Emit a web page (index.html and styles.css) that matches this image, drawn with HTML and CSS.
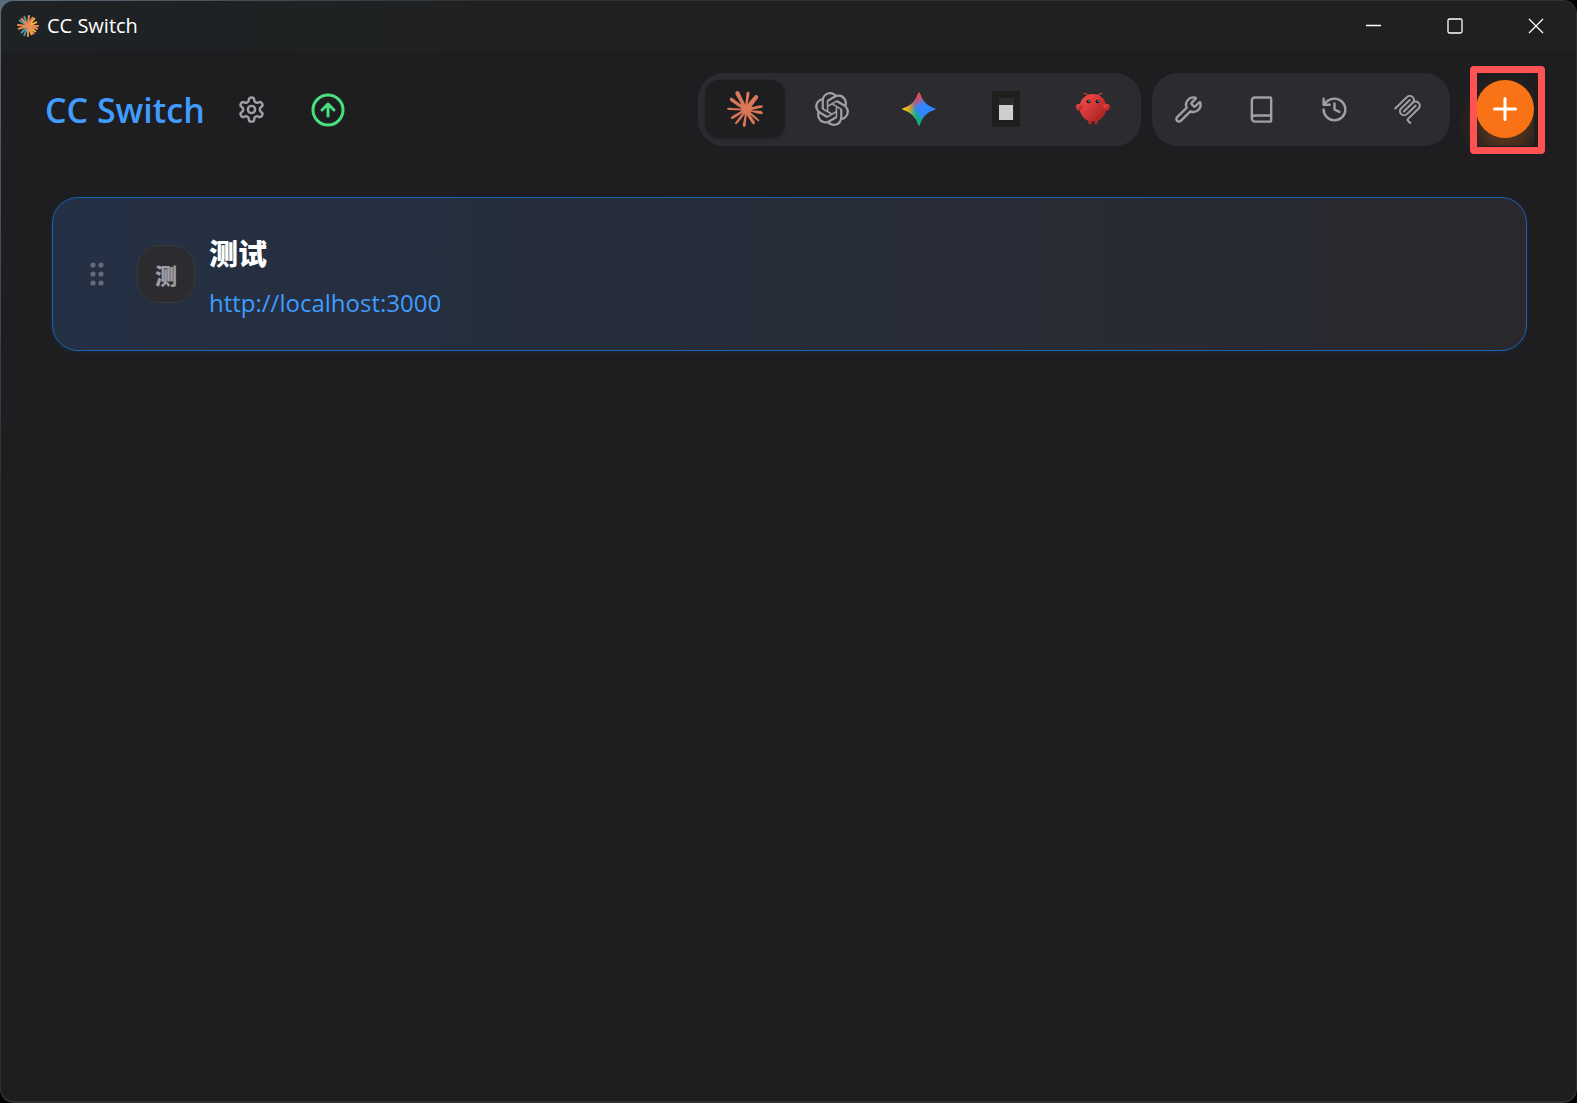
FILE: index.html
```html
<!DOCTYPE html>
<html lang="zh-CN">
<head>
  <meta charset="UTF-8">
  <meta name="viewport" content="width=device-width, initial-scale=1.0">
  <title>CC Switch</title>
  <link rel="stylesheet" href="styles.css">
</head>
<body>
  <div class="frame">
    <div class="window">
      <div class="titlebar">
        <svg class="app-logo" viewBox="0 0 24 24" aria-hidden="true">
          <g fill="none" stroke-width="2.2" stroke-linecap="round">
            <path stroke="#4f9aa3" d="M12 12 8 2M12 12 3 6M12 12 5 19M12 12 8 22"/>
            <path stroke="#f2b23c" d="M12 12 19 4M12 12 21 8M12 12 20 18M12 12 16 21"/>
            <path stroke="#ee8a55" d="M12 12 13 1M12 12 17 3M12 12 5 4M12 12 1 11M12 12 2 15M12 12 23 12M12 12 22 15M12 12 18 20M12 12 12 23"/>
          </g>
        </svg>
        <span class="titlebar-text">CC Switch</span>
        <div class="window-controls">
          <button class="window-btn" aria-label="Minimize">
            <svg viewBox="0 0 16 16"><path d="M0 7.5h15"/></svg>
          </button>
          <button class="window-btn" aria-label="Maximize">
            <svg viewBox="0 0 16 16"><rect x="1" y="1" width="14" height="14" rx="1.5"/></svg>
          </button>
          <button class="window-btn" aria-label="Close">
            <svg viewBox="0 0 16 16"><path d="M1 1l14 14M15 1 1 15"/></svg>
          </button>
        </div>
      </div>

      <header class="header">
        <div class="brand">
          <h1>CC Switch</h1>
          <button class="icon-btn" aria-label="Settings">
            <svg class="icon" viewBox="0 0 24 24">
              <path d="M12.22 2h-.44a2 2 0 0 0-2 2v.18a2 2 0 0 1-1 1.73l-.43.25a2 2 0 0 1-2 0l-.15-.08a2 2 0 0 0-2.73.73l-.22.38a2 2 0 0 0 .73 2.73l.15.1a2 2 0 0 1 1 1.72v.51a2 2 0 0 1-1 1.74l-.15.09a2 2 0 0 0-.73 2.73l.22.38a2 2 0 0 0 2.73.73l.15-.08a2 2 0 0 1 2 0l.43.25a2 2 0 0 1 1 1.73V20a2 2 0 0 0 2 2h.44a2 2 0 0 0 2-2v-.18a2 2 0 0 1 1-1.73l.43-.25a2 2 0 0 1 2 0l.15.08a2 2 0 0 0 2.73-.73l.22-.39a2 2 0 0 0-.73-2.73l-.15-.08a2 2 0 0 1-1-1.74v-.5a2 2 0 0 1 1-1.74l.15-.09a2 2 0 0 0 .73-2.73l-.22-.38a2 2 0 0 0-2.73-.73l-.15.08a2 2 0 0 1-2 0l-.43-.25a2 2 0 0 1-1-1.73V4a2 2 0 0 0-2-2z"/>
              <circle cx="12" cy="12" r="3"/>
            </svg>
          </button>
          <button class="icon-btn update-btn" aria-label="Update">
            <svg class="icon icon-lg" viewBox="0 0 24 24">
              <circle cx="12" cy="12" r="10"/>
              <path d="m16 12-4-4-4 4M12 16V8"/>
            </svg>
          </button>
        </div>

        <div class="toolbar">
          <nav class="pill apps">
            <button class="app-btn active" aria-label="Claude">
              <svg class="logo claude" viewBox="0 0 24 24">
                <path d="m4.7144 15.9555 4.7174-2.6471.079-.2307-.079-.1275h-.2307l-.7893-.0486-2.6956-.0729-2.3375-.0971-2.2646-.1214-.5707-.1215-.5343-.7042.0546-.3522.4797-.3218.686.0608 1.5179.1032 2.2767.1578 1.6514.0972 2.4468.255h.3886l.0546-.1579-.1336-.0971-.1032-.0972L6.973 9.8356l-2.55-1.6879-1.3356-.9714-.7225-.4918-.3643-.4614-.1578-1.0078.6557-.7225.8803.0607.2246.0607.8925.686 1.9064 1.4754 2.4893 1.8336.3643.3035.1457-.1032.0182-.0728-.164-.2733-1.3539-2.4467-1.445-2.4893-.6435-1.032-.17-.6194c-.0607-.255-.1032-.4674-.1032-.7285L6.287.1335 6.6997 0l.9957.1336.419.3642.6192 1.4147 1.0018 2.2282 1.5543 3.0296.4553.8985.2429.8318.091.255h.1579v-.1457l.1275-1.706.2368-2.0947.2307-2.6957.0789-.7589.3764-.9107.7468-.4918.5828.2793.4797.686-.0668.4433-.2853 1.8517-.5586 2.9021-.3643 1.9429h.2125l.2429-.2429.9835-1.3053 1.6514-2.0643.7286-.8196.85-.9046.5464-.4311h1.0321l.759 1.1293-.34 1.1657-1.0625 1.3478-.8804 1.1414-1.2628 1.7-.7893 1.36.0729.1093.1882-.0183 2.8535-.607 1.5421-.2794 1.8396-.3157.8318.3886.091.3946-.3278.8075-1.967.4857-2.3072.4614-3.4364.8136-.0425.0304.0486.0607 1.5482.1457.6618.0364h1.621l3.0175.2247.7892.522.4736.6376-.079.4857-1.2142.6193-1.6393-.3886-3.825-.9107-1.3113-.3279h-.1822v.1093l1.0929 1.0686 2.0035 1.8092 2.5075 2.3314.1275.5768-.3218.4554-.34-.0486-2.2039-1.6575-.85-.7468-1.9246-1.621h-.1275v.17l.4432.6496 2.3436 3.5214.1214 1.0807-.17.3521-.6071.2125-.6679-.1214-1.3721-1.9246L14.38 17.959l-1.1414-1.9428-.1397.079-.674 7.2552-.3156.3703-.7286.2793-.6071-.4614-.3218-.7468.3218-1.4753.3886-1.9246.3157-1.53.2853-1.9004.17-.6314-.0121-.0425-.1397.0182-1.4328 1.9672-2.1796 2.9446-1.7243 1.8456-.4128.164-.7164-.3704.0667-.6618.4008-.5889 2.386-3.0357 1.4389-1.882.929-1.0868-.0062-.1579h-.0546l-6.3385 4.1164-1.1293.1457-.4857-.4554.0608-.7467.2307-.2429 1.9064-1.3114Z"/>
              </svg>
            </button>
            <button class="app-btn" aria-label="Codex">
              <svg class="logo codex" viewBox="0 0 24 24">
                <path d="M22.2819 9.8211a5.9847 5.9847 0 0 0-.5157-4.9108 6.0462 6.0462 0 0 0-6.5098-2.9A6.0651 6.0651 0 0 0 4.9807 4.1818a5.9847 5.9847 0 0 0-3.9977 2.9 6.0462 6.0462 0 0 0 .7427 7.0966 5.98 5.98 0 0 0 .511 4.9107 6.051 6.051 0 0 0 6.5146 2.9001A5.9847 5.9847 0 0 0 13.2599 24a6.0557 6.0557 0 0 0 5.7718-4.2058 5.9894 5.9894 0 0 0 3.9977-2.9001 6.0557 6.0557 0 0 0-.7475-7.0729zm-9.022 12.6081a4.4755 4.4755 0 0 1-2.8764-1.0408l.1419-.0804 4.7783-2.7582a.7948.7948 0 0 0 .3927-.6813v-6.7369l2.02 1.1686a.071.071 0 0 1 .038.052v5.5826a4.504 4.504 0 0 1-4.4945 4.4944zm-9.6607-4.1254a4.4708 4.4708 0 0 1-.5346-3.0137l.142.0852 4.783 2.7582a.7712.7712 0 0 0 .7806 0l5.8428-3.3685v2.3324a.0804.0804 0 0 1-.0332.0615L9.74 19.9502a4.4992 4.4992 0 0 1-6.1408-1.6464zM2.3408 7.8956a4.485 4.485 0 0 1 2.3655-1.9728V11.6a.7664.7664 0 0 0 .3879.6765l5.8144 3.3543-2.0201 1.1685a.0757.0757 0 0 1-.071 0l-4.8303-2.7865A4.504 4.504 0 0 1 2.3408 7.872zm16.5963 3.8558L13.1038 8.364 15.1192 7.2a.0757.0757 0 0 1 .071 0l4.8303 2.7913a4.4944 4.4944 0 0 1-.6765 8.1042v-5.6772a.79.79 0 0 0-.407-.667zm2.0107-3.0231l-.142-.0852-4.7735-2.7818a.7759.7759 0 0 0-.7854 0L9.409 9.2297V6.8974a.0662.0662 0 0 1 .0284-.0615l4.8303-2.7866a4.4992 4.4992 0 0 1 6.6802 4.66zM8.3065 12.863l-2.02-1.1638a.0804.0804 0 0 1-.038-.0567V6.0742a4.4992 4.4992 0 0 1 7.3757-3.4537l-.142.0805L8.704 5.459a.7948.7948 0 0 0-.3927.6813zm1.0976-2.3654l2.602-1.4998 2.6069 1.4998v2.9994l-2.5974 1.4997-2.6067-1.4997Z"/>
              </svg>
            </button>
            <button class="app-btn" aria-label="Gemini">
              <svg class="logo" viewBox="0 0 24 24">
                <defs>
                  <linearGradient id="gem-green" gradientUnits="userSpaceOnUse" x1="7" x2="11" y1="15.5" y2="12"><stop stop-color="#08B962"/><stop offset="1" stop-color="#08B962" stop-opacity="0"/></linearGradient>
                  <linearGradient id="gem-red" gradientUnits="userSpaceOnUse" x1="8" x2="11.5" y1="5.5" y2="11"><stop stop-color="#F94543"/><stop offset="1" stop-color="#F94543" stop-opacity="0"/></linearGradient>
                  <linearGradient id="gem-yellow" gradientUnits="userSpaceOnUse" x1="3.5" x2="17.5" y1="13.5" y2="12"><stop stop-color="#FABC12"/><stop offset=".46" stop-color="#FABC12" stop-opacity="0"/></linearGradient>
                  <path id="gem-star" d="M20.616 10.835a14.147 14.147 0 01-4.45-3.001 14.111 14.111 0 01-3.678-6.452.503.503 0 00-.975 0 14.134 14.134 0 01-3.679 6.452 14.155 14.155 0 01-4.45 3.001c-.65.28-1.318.505-2.002.678a.502.502 0 000 .975c.684.172 1.35.397 2.002.677a14.147 14.147 0 014.45 3.001 14.112 14.112 0 013.679 6.453.502.502 0 00.975 0c.172-.685.397-1.351.677-2.003a14.145 14.145 0 013.001-4.45 14.113 14.113 0 016.453-3.678.503.503 0 000-.975 13.245 13.245 0 01-2.003-.678z"/>
                </defs>
                <use href="#gem-star" fill="#3186FF"/>
                <use href="#gem-star" fill="url(#gem-green)"/>
                <use href="#gem-star" fill="url(#gem-red)"/>
                <use href="#gem-star" fill="url(#gem-yellow)"/>
              </svg>
            </button>
            <button class="app-btn" aria-label="OpenCode">
              <svg class="logo" viewBox="0 0 36 36" shape-rendering="crispEdges">
                <path fill="#211e1e" fill-rule="evenodd" d="M4 0h28v36H4zM11 7v22h15V7z"/>
                <path fill="#cfcecd" d="M11 14h14v15H11z"/>
              </svg>
            </button>
            <button class="app-btn" aria-label="OpenClaw">
              <svg class="logo" viewBox="0 0 120 120">
                <defs>
                  <linearGradient id="claw" x1="0" y1="0" x2="1" y2="1"><stop stop-color="#ff4d4d"/><stop offset="1" stop-color="#991b1b"/></linearGradient>
                </defs>
                <g fill="url(#claw)">
                  <path d="M60 10C30 10 15 35 15 55s15 40 30 45v10h10v-10s5 2 10 0v10h10v-10c15-5 30-25 30-45S90 10 60 10Z"/>
                  <path d="M20 45C5 40 0 50 5 60s15 5 20-5c3-7 0-10-5-10Z"/>
                  <path d="M100 45c15-5 20 5 15 15s-15 5-20-5c-3-7 0-10 5-10Z"/>
                </g>
                <path fill="none" stroke="#ff4d4d" stroke-width="3" stroke-linecap="round" d="M45 15Q35 5 30 8M75 15Q85 5 90 8"/>
                <circle cx="45" cy="35" r="6" fill="#050810"/>
                <circle cx="75" cy="35" r="6" fill="#050810"/>
                <circle cx="46" cy="34" r="3" fill="#00b5a2"/>
                <circle cx="76" cy="34" r="3" fill="#00b5a2"/>
              </svg>
            </button>
          </nav>

          <div class="pill tools">
            <button class="icon-btn" aria-label="Skills">
              <svg class="icon" viewBox="0 0 24 24"><path d="M14.7 6.3a1 1 0 0 0 0 1.4l1.6 1.6a1 1 0 0 0 1.4 0l3.106-3.105c.32-.322.863-.22.983.218a6 6 0 0 1-8.259 7.057l-7.91 7.91a1 1 0 0 1-2.999-3l7.91-7.91a6 6 0 0 1 7.057-8.259c.438.12.54.662.219.984z"/></svg>
            </button>
            <button class="icon-btn" aria-label="Prompts">
              <svg class="icon" viewBox="0 0 24 24"><path d="M4 19.5v-15A2.5 2.5 0 0 1 6.5 2H19a1 1 0 0 1 1 1v18a1 1 0 0 1-1 1H6.5a1 1 0 0 1 0-5H20"/></svg>
            </button>
            <button class="icon-btn" aria-label="Sessions">
              <svg class="icon" viewBox="0 0 24 24"><path d="M3 12a9 9 0 1 0 9-9 9.75 9.75 0 0 0-6.74 2.74L3 8M3 3v5h5M12 7v5l4 2"/></svg>
            </button>
            <button class="icon-btn" aria-label="MCP">
              <svg class="icon solid" viewBox="0 0 24 24">
                <path d="M15.688 2.343a2.588 2.588 0 00-3.61 0l-9.626 9.44a.863.863 0 01-1.203 0 .823.823 0 010-1.18l9.626-9.44a4.313 4.313 0 016.016 0 4.116 4.116 0 011.204 3.54 4.3 4.3 0 013.609 1.18l.05.05a4.115 4.115 0 010 5.9l-8.706 8.537a.274.274 0 000 .393l1.788 1.754a.823.823 0 010 1.18.863.863 0 01-1.203 0l-1.788-1.753a1.92 1.92 0 010-2.754l8.706-8.538a2.47 2.47 0 000-3.54l-.05-.049a2.588 2.588 0 00-3.607-.003l-7.172 7.034-.002.002-.098.097a.863.863 0 01-1.204 0 .823.823 0 010-1.18l7.273-7.133a2.47 2.47 0 00-.003-3.537z"/>
                <path d="M14.485 4.703a.823.823 0 000-1.18.863.863 0 00-1.204 0l-7.119 6.982a4.115 4.115 0 000 5.9 4.314 4.314 0 006.016 0l7.12-6.982a.823.823 0 000-1.18.863.863 0 00-1.204 0l-7.119 6.982a2.588 2.588 0 01-3.61 0 2.47 2.47 0 010-3.54l7.12-6.982z"/>
              </svg>
            </button>
          </div>

          <div class="add-slot">
            <button class="add-btn" aria-label="Add provider">
              <svg class="icon icon-lg" viewBox="0 0 24 24"><path d="M5 12h14M12 5v14"/></svg>
            </button>
          </div>
        </div>
        <span class="highlight"></span>
      </header>

      <main class="providers">
        <article class="card">
          <button class="grip" aria-label="Drag">
            <svg viewBox="0 0 14 24">
              <circle cx="3" cy="3" r="2.6"/><circle cx="11" cy="3" r="2.6"/>
              <circle cx="3" cy="12" r="2.6"/><circle cx="11" cy="12" r="2.6"/>
              <circle cx="3" cy="21" r="2.6"/><circle cx="11" cy="21" r="2.6"/>
            </svg>
          </button>
          <span class="avatar">测</span>
          <div class="info">
            <h2>测试</h2>
            <a href="http://localhost:3000">http://localhost:3000</a>
          </div>
        </article>
      </main>
    </div>
  </div>
</body>
</html>
```
FILE: styles.css
```css
* {
  box-sizing: border-box;
}

body {
  margin: 0;
  background: radial-gradient(circle at top left, #5a6d7c, #000 400px);
  color: #fff;
  font-family: "Open Sans", "Noto Sans", "Noto Sans CJK SC", sans-serif;
}

button {
  padding: 0;
  border: 0;
  background: none;
  color: inherit;
  font: inherit;
  cursor: pointer;
}

svg {
  display: block;
}

.frame {
  display: flex;
  min-height: 100vh;
  padding: 1px 1px 2px;
  border-radius: 14px;
  background: radial-gradient(circle at top left, #5a6d7c, #303133 480px);
}

.window {
  flex: 1;
  border-radius: 13px;
  background: #1e1e20;
  overflow: hidden;
}

/* title bar */
.titlebar {
  display: flex;
  align-items: center;
  height: 50px;
  padding-left: 16px;
  background: linear-gradient(90deg, #1e2224, #202020 50%);
}

.app-logo {
  width: 22px;
  height: 22px;
}

.titlebar-text {
  margin-left: 8px;
  font-size: 20px;
  line-height: 28px;
}

.window-controls {
  display: flex;
  align-self: stretch;
  margin-left: auto;
}

.window-btn {
  display: flex;
  align-items: center;
  justify-content: center;
  width: 81px;
}

.window-btn svg {
  width: 16px;
  height: 16px;
  fill: none;
  stroke: #fff;
  stroke-width: 1.3;
}

/* header */
.header {
  position: relative;
  display: flex;
  align-items: center;
  justify-content: space-between;
  padding: 22px 42px 0 44px;
}

.brand {
  display: flex;
  align-items: center;
  gap: 18px;
}

.brand h1 {
  margin: 0;
  color: #409cff;
  font-size: 34px;
  font-weight: 600;
  line-height: 50px;
}

.icon-btn {
  display: flex;
  align-items: center;
  justify-content: center;
  width: 58px;
  height: 58px;
  color: #9f9fa8;
}

.update-btn {
  color: #4ade80;
}

.icon {
  width: 29px;
  height: 29px;
  fill: none;
  stroke: currentColor;
  stroke-width: 2;
  stroke-linecap: round;
  stroke-linejoin: round;
}

.icon.solid {
  fill: currentColor;
  stroke: none;
}

.icon-lg {
  width: 36px;
  height: 36px;
}

/* clips the glow of the add button */
.toolbar {
  display: flex;
  gap: 11px;
  overflow: hidden;
}

.pill {
  display: flex;
  height: 73px;
  border-radius: 26px;
  background: #2c2c30;
}

.apps {
  gap: 7px;
  padding: 7px 8px 8px 7px;
}

.app-btn {
  display: flex;
  align-items: center;
  justify-content: center;
  width: 80px;
  height: 58px;
  border-radius: 14px;
}

.app-btn.active {
  background: #1e1e20;
  box-shadow: 0 1px 3px rgba(0, 0, 0, 0.2);
}

.logo {
  width: 36px;
  height: 36px;
}

.claude {
  fill: #d97757;
}

.codex {
  width: 34px;
  height: 34px;
  fill: #9f9fa8;
}

.tools {
  gap: 15px;
  padding: 7px 14px 8px 7px;
}

.add-slot {
  padding: 7px 0 8px 15px;
}

.add-btn {
  display: flex;
  align-items: center;
  justify-content: center;
  width: 58px;
  height: 58px;
  border-radius: 50%;
  background: #f97316;
  box-shadow: 0 14px 22px rgba(249, 115, 22, 0.3);
}

.highlight {
  position: absolute;
  top: 15px;
  right: 31px;
  width: 75px;
  height: 88px;
  border: 7px solid #ff5252;
  border-radius: 4px;
  pointer-events: none;
}

/* provider list */
.providers {
  padding: 51px 49px 51px 51px;
}

.card {
  display: flex;
  align-items: center;
  min-height: 154px;
  padding: 28px 37px;
  border: 1px solid #1b62b3;
  border-radius: 26px;
  background: linear-gradient(90deg, #243044, #29292d);
  box-shadow: 0 1px 4px rgba(10, 132, 255, 0.12);
}

.grip {
  margin-right: 33px;
  cursor: grab;
}

.grip svg {
  width: 14px;
  height: 24px;
  fill: #666b75;
}

.avatar {
  display: flex;
  align-items: center;
  justify-content: center;
  width: 58px;
  height: 58px;
  margin-right: 14px;
  border: 1px solid #3a3a3c;
  border-radius: 22px;
  background: #2c2b30;
  color: #9f9fa8;
  font-size: 22px;
  font-weight: 800;
}

.info {
  padding-top: 6px;
}

.info h2 {
  margin: 0 0 10px;
  font-size: 29px;
  font-weight: 800;
  line-height: 42px;
}

.info a {
  display: block;
  color: #409cff;
  font-size: 24px;
  line-height: 36px;
  text-decoration: none;
}
```
